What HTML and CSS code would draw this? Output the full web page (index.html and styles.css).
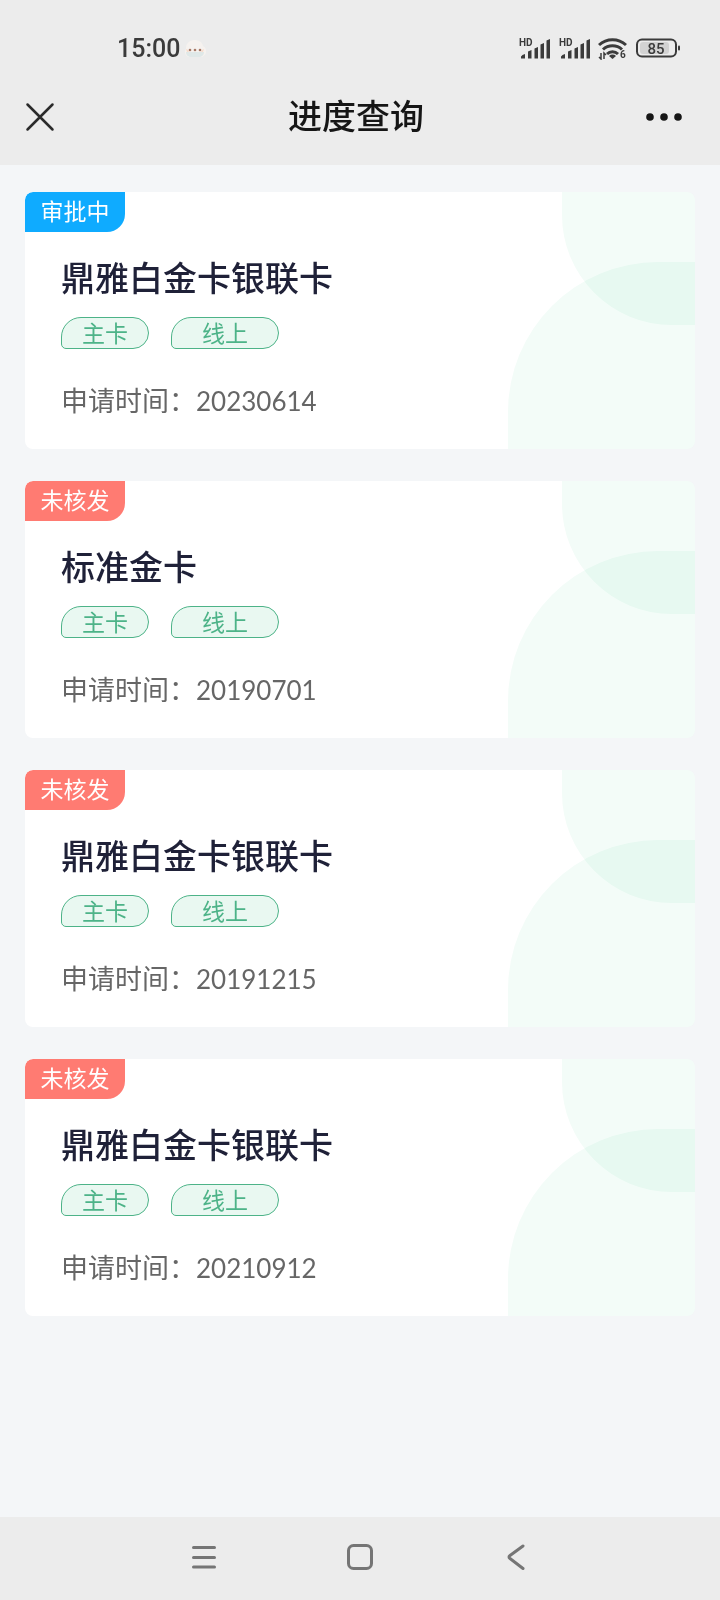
FILE: index.html
```html
<!DOCTYPE html>
<html lang="zh-CN">
<head>
    <meta charset="UTF-8">
    <meta name="viewport" content="width=device-width, initial-scale=1.0">
    <title>进度查询</title>
    <link rel="stylesheet" href="styles.css">
</head>
<body>
    <header class="header">
        <div class="status">
            <span class="time">15:00</span>
            <svg class="cloud" width="22" height="20" viewBox="0 0 22 20">
                <path d="M5 18a5 5 0 0 1-3-8 8 8 0 0 1 8-9c5 0 8 2 9 6a6 6 0 0 1-1 11z" fill="#f6f2ef"/>
                <path d="M2 13h18a5 5 0 0 1-4 5H6a5 5 0 0 1-4-5z" fill="#dfe8e8"/>
                <path d="M2 10q2 0 3 3H3zM20 10q-2 0-3 3h2z" fill="#f8dccb"/>
                <g fill="#a87a68"><circle cx="6" cy="11" r="1.300"/><circle cx="11" cy="11" r="1.300"/><circle cx="16" cy="11" r="1.300"/></g>
            </svg>
            <div class="status-icons">
                <svg width="32" height="22" viewBox="0 0 32 22">
                    <text class="hd" x="1" y="8">HD</text>
                    <path d="M3 20.500v-2q1-2 4-2.500v4.500zM10 20.500v-7l3.500-1.500v8.500zM16.500 20.500V10.500l3.500-1.500v11.500zM22.500 20.500V6.500l3.500-1.500v15.500zM28.500 20.500V2.500l3.500-1.500v19.500z" class="bars"/>
                </svg>
                <svg width="32" height="22" viewBox="0 0 32 22">
                    <text class="hd" x="1" y="8">HD</text>
                    <path d="M3 20.500v-2q1-2 4-2.500v4.500zM10 20.500v-7l3.500-1.500v8.500zM16.500 20.500V10.500l3.500-1.500v11.500zM22.500 20.500V6.500l3.500-1.500v15.500zM28.500 20.500V2.500l3.500-1.500v19.500z" class="bars"/>
                </svg>
                <svg width="30" height="22" viewBox="0 0 30 22">
                    <g fill="none" stroke="#3b3b3b" stroke-width="3">
                        <path d="M1 7a20 20 0 0 1 27 0"/>
                        <path d="M5 11.500a14 14 0 0 1 19 0"/>
                        <path d="M9 16a8 8 0 0 1 11 0"/>
                    </g>
                    <path d="M11 18a5 5 0 0 1 7 0L14.500 21z" fill="#3b3b3b"/>
                    <path d="M3 15v6l-2-2M6 21v-6l2 2" fill="none" stroke="#3b3b3b" stroke-width="1.500"/>
                    <text class="six" x="22" y="20">6</text>
                </svg>
                <svg width="44" height="22" viewBox="0 0 44 22">
                    <rect x="4" y="4" width="29" height="12" rx="3" fill="#d2d2d2"/>
                    <rect x="1" y="1.500" width="39" height="17" rx="5" fill="none" stroke="#3b3b3b" stroke-width="2"/>
                    <path d="M43 8.500v3" stroke="#3b3b3b" stroke-width="2" stroke-linecap="round"/>
                    <text class="level" x="20" y="16" text-anchor="middle">85</text>
                </svg>
            </div>
        </div>
        <div class="nav">
            <button class="nav-btn close" type="button" aria-label="关闭">
                <svg width="32" height="32" viewBox="0 0 32 32">
                    <path d="M3.500 3.500l25 25M28.500 3.500l-25 25" stroke="#2b2b2b" stroke-width="2.500" stroke-linecap="round"/>
                </svg>
            </button>
            <h1 class="nav-title">进度查询</h1>
            <button class="nav-btn more" type="button" aria-label="更多">
                <svg width="48" height="32" viewBox="0 0 48 32">
                    <g fill="#161616"><circle cx="10" cy="16" r="3.800"/><circle cx="24" cy="16" r="3.800"/><circle cx="38" cy="16" r="3.800"/></g>
                </svg>
            </button>
        </div>
    </header>

    <main class="list">
        <section class="card">
            <span class="badge pending">审批中</span>
            <div class="info">
                <h2>鼎雅白金卡银联卡</h2>
                <div class="tags">
                    <span class="tag">主卡</span>
                    <span class="tag wide">线上</span>
                </div>
                <p class="date">申请时间：<span>20230614</span></p>
            </div>
        </section>
        <section class="card">
            <span class="badge">未核发</span>
            <div class="info">
                <h2>标准金卡</h2>
                <div class="tags">
                    <span class="tag">主卡</span>
                    <span class="tag wide">线上</span>
                </div>
                <p class="date">申请时间：<span>20190701</span></p>
            </div>
        </section>
        <section class="card">
            <span class="badge">未核发</span>
            <div class="info">
                <h2>鼎雅白金卡银联卡</h2>
                <div class="tags">
                    <span class="tag">主卡</span>
                    <span class="tag wide">线上</span>
                </div>
                <p class="date">申请时间：<span>20191215</span></p>
            </div>
        </section>
        <section class="card">
            <span class="badge">未核发</span>
            <div class="info">
                <h2>鼎雅白金卡银联卡</h2>
                <div class="tags">
                    <span class="tag">主卡</span>
                    <span class="tag wide">线上</span>
                </div>
                <p class="date">申请时间：<span>20210912</span></p>
            </div>
        </section>
    </main>

    <footer class="system">
        <button type="button" aria-label="菜单">
            <svg width="40" height="40" viewBox="0 0 40 40">
                <path d="M9.500 10.500h21M9.500 20.500h21M9.500 30h21"/>
            </svg>
        </button>
        <button type="button" aria-label="主页">
            <svg width="40" height="40" viewBox="0 0 40 40">
                <rect x="8.500" y="8.500" width="23" height="23" rx="5"/>
            </svg>
        </button>
        <button type="button" aria-label="返回">
            <svg width="40" height="40" viewBox="0 0 40 40">
                <path d="M27 9L14 18.500q-2 1.500 0 3L27 31.500"/>
            </svg>
        </button>
    </footer>
</body>
</html>
```
FILE: styles.css
```css
* {
    margin: 0;
    padding: 0;
    box-sizing: border-box;
}
body {
    min-height: 100vh;
    display: flex;
    flex-direction: column;
    background-color: #f4f6f8;
    font-family: "Noto Sans CJK SC", sans-serif;
}
button {
    border: none;
    background: none;
    cursor: pointer;
}
svg {
    display: block;
}

/* 顶部 */
.header {
    padding: 34px 0 24px;
    background-color: #ececec;
}
.status {
    display: flex;
    align-items: center;
    height: 30px;
    padding: 0 40px 0 117px;
}
.time {
    font-family: Roboto, sans-serif;
    font-size: 25px;
    font-weight: 500;
    line-height: 30px;
    color: #3b3b3b;
}
.cloud {
    margin-left: 4px;
}
.status-icons {
    display: flex;
    gap: 8px;
    margin-left: auto;
}
.hd, .six, .level {
    font-family: Roboto, sans-serif;
    font-size: 10px;
    font-weight: 700;
    fill: #3b3b3b;
}
.level {
    font-size: 15px;
    font-weight: 500;
}
.bars {
    fill: #3b3b3b;
}
.nav {
    display: grid;
    grid-template-columns: 1fr auto 1fr;
    align-items: center;
    height: 49px;
    margin-top: 28px;
    padding: 0 32px 0 24px;
}
.nav-btn.close {
    justify-self: start;
}
.nav-btn.more {
    justify-self: end;
}
.nav-title {
    padding-bottom: 4px;
    font-size: 34px;
    font-weight: 500;
    line-height: 44px;
    color: #161616;
}

/* 卡片列表 */
.list {
    flex: 1;
    display: flex;
    flex-direction: column;
    gap: 32px;
    padding: 27px 25px 32px;
}
.card {
    position: relative;
    border-radius: 8px;
    overflow: hidden;
    background-color: #fff;
}
.card::before, .card::after {
    content: "";
    position: absolute;
    right: 0;
    background-color: #f3fcf8;
    mix-blend-mode: multiply;
}
.card::before {
    top: 0;
    width: 133px;
    height: 133px;
    border-bottom-left-radius: 110px;
}
.card::after {
    bottom: 0;
    width: 187px;
    height: 187px;
    border-top-left-radius: 150px;
}
.badge {
    display: block;
    width: 100px;
    padding-bottom: 4px;
    border-radius: 8px 0 18px 0;
    background-color: #ff7b72;
    text-align: center;
    font-size: 23px;
    line-height: 36px;
    color: #fff;
}
.badge.pending {
    background-color: #0fabff;
}
.info {
    padding: 21px 36px 28px;
}
.info h2 {
    font-size: 34px;
    font-weight: 500;
    line-height: 48px;
    color: #1f2138;
}
.tags {
    display: flex;
    gap: 22px;
    margin-top: 16px;
}
.tag {
    padding: 0 20px 2px;
    border: 1px solid #4db388;
    border-radius: 20px 16px 16px 5px;
    background-color: #e9f8f1;
    font-size: 23px;
    line-height: 28px;
    color: #4db388;
}
.tag.wide {
    padding: 0 30px 2px;
}
.date {
    margin-top: 31px;
    font-size: 27px;
    line-height: 40px;
    color: #666;
}
.date span {
    font-family: Lato, sans-serif;
    font-size: 26px;
}

/* 系统导航 */
.system {
    display: flex;
    justify-content: center;
    align-items: center;
    gap: 116px;
    height: 83px;
    padding-bottom: 3px;
    background-color: #ececec;
}
.system svg {
    fill: none;
    stroke: #757575;
    stroke-width: 3;
    stroke-linecap: round;
    stroke-linejoin: round;
}
```
